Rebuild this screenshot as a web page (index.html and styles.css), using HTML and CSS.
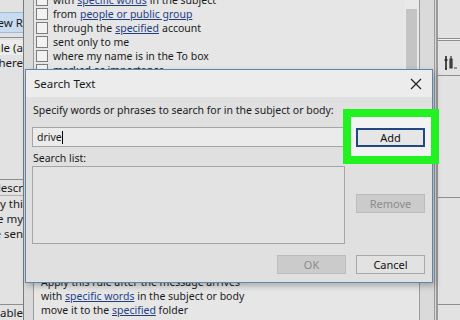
FILE: index.html
```html
<!DOCTYPE html>
<html lang="en">
<head>
  <meta charset="UTF-8">
  <meta name="viewport" content="width=device-width, initial-scale=1.0">
  <title>Search Text</title>
  <link rel="stylesheet" href="styles.css">
</head>
<body>
  <div class="desk">

    <!-- left window, mostly hidden behind the wizard -->
    <div class="side side-left">
      <div class="side-btn"><span>New R</span></div>
      <div class="side-rule"></div>
      <div class="side-row sel"><span>Rule (a</span></div>
      <div class="side-row"><span>where</span></div>
      <div class="side-space"></div>
      <div class="side-rule"></div>
      <div class="side-row"><span>descr</span></div>
      <div class="side-rule light"></div>
      <div class="side-row"><span>Apply thi</span></div>
      <div class="side-row"><span>where my</span></div>
      <div class="side-row"><span>the sen</span></div>
      <div class="side-fill"></div>
      <div class="side-rule"></div>
      <div class="side-row"><span>Enable</span></div>
    </div>

    <!-- rules wizard behind the dialog -->
    <div class="wizard">
      <div class="cond-box">
        <ul class="cond-list">
          <li><span class="chk"></span>with <a>specific words</a> in the subject</li>
          <li><span class="chk"></span>from <a>people or public group</a></li>
          <li><span class="chk"></span>through the <a>specified</a> account</li>
          <li><span class="chk"></span>sent only to me</li>
          <li><span class="chk"></span>where my name is in the To box</li>
          <li><span class="chk"></span>marked as importance</li>
          <li><span class="chk"></span>marked as sensitivity</li>
        </ul>
        <div class="scroll"><div class="thumb"></div></div>
      </div>
      <div class="desc-box">
        <p>Apply this rule after the message arrives</p>
        <p>with <a>specific words</a> in the subject or body</p>
        <p>move it to the <a>specified</a> folder</p>
      </div>
    </div>

    <!-- right window -->
    <div class="side side-right">
      <div class="side-space top"></div>
      <div class="side-rule double"></div>
      <div class="side-tool">
        <svg width="14" height="15" viewBox="0 0 14 15">
          <path d="M3 1v4M1.5 5h3M3 5v9M2 14h2" stroke="#222" stroke-width="1.6" fill="none"/>
          <path d="M8 1v3M7 4h2l0 9h-2z" stroke="#333" stroke-width="1.2" fill="#555"/>
          <path d="M11 13h3" stroke="#444" stroke-width="1"/>
        </svg>
      </div>
      <div class="side-rule"></div>
      <div class="side-space mid"></div>
      <div class="side-rule"></div>
      <div class="side-space low"></div>
      <div class="side-rule"></div>
    </div>

    <!-- the Search Text dialog -->
    <div class="dialog">
      <div class="dlg-title">
        <span>Search Text</span>
        <svg class="close" width="12" height="12" viewBox="0 0 12 12">
          <path d="M1 1l10 10M11 1L1 11" stroke="#1a1a1a" stroke-width="1.1"/>
        </svg>
      </div>
      <div class="dlg-body">
        <div class="dlg-label">Specify words or phrases to search for in the subject or body:</div>
        <div class="dlg-row add-row">
          <div class="field"><span>drive</span><i class="caret"></i></div>
          <div class="hilite"><button class="btn btn-default">Add</button></div>
        </div>
        <div class="dlg-label list-label">Search list:</div>
        <div class="dlg-row">
          <div class="listbox"></div>
          <div class="side-btns"><button class="btn" disabled>Remove</button></div>
        </div>
        <div class="dlg-foot">
          <button class="btn" disabled>OK</button>
          <button class="btn">Cancel</button>
        </div>
      </div>
    </div>

  </div>
</body>
</html>
```

FILE: styles.css
```css
* {
  box-sizing: border-box;
}

body {
  margin: 0;
  font-family: "Noto Sans", "Open Sans", sans-serif;
  font-size: 10.5px;
  color: #1a1a1a;
  background: #d6d6d6;
}

.desk {
  position: relative;
  width: 460px;
  height: 320px;
  overflow: hidden;
}

/* side windows */
.side {
  position: absolute;
  top: 0;
  width: 23px;
  height: 320px;
  overflow: hidden;
  background: #e2e2e2;
  display: flex;
  flex-direction: column;
  font-size: 11.5px;
}

.side-left {
  left: 0;
}

.side-right {
  left: 437px;
  border-left: 1px solid #9a9a9a;
}

.side-btn,
.side-row {
  display: flex;
  justify-content: flex-end;
  white-space: nowrap;
}

.side-btn {
  margin-top: 12px;
  height: 21px;
  align-items: center;
  background: #c9dcef;
  border-top: 1px solid #9fbad6;
  border-bottom: 1px solid #9fbad6;
}

.side-rule {
  height: 1px;
  background: #8e8e8e;
  margin-top: 4px;
}

.side-rule.light {
  background: #b0b0b0;
  margin-top: 0;
}

.side-rule.double {
  height: 3px;
  border-top: 1px solid #8e8e8e;
  border-bottom: 1px solid #8e8e8e;
  background: #f4f4f4;
}

.side-row {
  height: 15px;
  line-height: 15px;
}

.side-row.sel {
  margin-top: 2px;
  background: #ececec;
}

.side-space {
  height: 105px;
}

.side-fill {
  flex: 1;
}

.side-space.top {
  height: 34px;
}

.side-tool {
  height: 30px;
  padding: 14px 0 0 5px;
}

.side-tool svg {
  display: block;
}

.side-space.mid {
  height: 117px;
}

.side-space.low {
  height: 102px;
}

/* wizard window */
.wizard {
  position: absolute;
  left: 23px;
  top: -10px;
  width: 414px;
  height: 340px;
  background: #dadada;
  border-left: 1px solid #7a7a7a;
  border-right: 3px double #9a9a9a;
  padding-left: 9px;
}

.cond-box {
  display: flex;
  width: 387px;
  height: 240px;
  background: #e6e6e6;
  border: 1px solid #9a9a9a;
}

.cond-list {
  flex: 1;
  list-style: none;
  margin: 0;
  padding: 2px 0 0 2px;
}

.cond-list li {
  display: flex;
  align-items: center;
  height: 14px;
  white-space: nowrap;
}

.chk {
  width: 12px;
  height: 12px;
  margin-right: 5px;
  background: #f2f2f2;
  border: 1px solid #7c7c7c;
}

a {
  color: #1f3e86;
  text-decoration: underline;
  margin: 0 3px;
}

.scroll {
  width: 15px;
  background: #e9e9e9;
  padding: 18px 2px 0;
}

.thumb {
  height: 200px;
  background: #c4c4c4;
}

.desc-box {
  margin-top: 44px;
  width: 387px;
  height: 80px;
  background: #e6e6e6;
  border: 1px solid #9a9a9a;
  padding: 0 0 0 7px;
}

.desc-box p {
  margin: 0;
  line-height: 14px;
  white-space: nowrap;
}

.desc-box a {
  margin: 0;
}

/* dialog */
.dialog {
  position: absolute;
  left: 25px;
  top: 69px;
  width: 408px;
  height: 214px;
  background: #e0e0e0;
  border: 1px solid #5f86b3;
  box-shadow: 2px 3px 6px rgba(0, 0, 0, 0.25);
}

.dlg-title {
  display: flex;
  align-items: center;
  justify-content: space-between;
  height: 27px;
  padding: 0 10px 0 8px;
  background: #ececec;
  font-size: 11.5px;
}

.dlg-body {
  padding: 5px 7px 0 6px;
}

.dlg-label {
  height: 16px;
  line-height: 16px;
  padding-left: 1px;
}

.dlg-row {
  display: flex;
  justify-content: space-between;
}

.add-row {
  margin-top: 9px;
  align-items: center;
}

.field {
  width: 312px;
  height: 20px;
  display: flex;
  align-items: center;
  padding-left: 4px;
  background: #ebebeb;
  border: 1px solid #a5a5a5;
}

.caret {
  width: 1px;
  height: 13px;
  background: #000;
}

/* green call-out drawn over the Add button */
.hilite {
  position: relative;
}

.hilite::before {
  content: "";
  position: absolute;
  left: -13px;
  right: -14px;
  top: -19px;
  bottom: -17px;
  border: 8px solid #22f222;
  background: #f3f3f3;
}

.btn {
  position: relative;
  width: 69px;
  height: 19px;
  font-family: inherit;
  font-size: 11px;
  color: #111;
  background: #e2e2e2;
  border: 1px solid #a8a8a8;
  padding: 0;
}

.btn:disabled {
  background: #cbcbcb;
  border-color: #bcbcbc;
  color: #8c8c8c;
}

.btn-default {
  display: block;
  border: 2px solid #23487f;
  background: #e6e6e6;
}

.list-label {
  margin-top: 3px;
}

.listbox {
  width: 313px;
  height: 78px;
  background: #e3e3e3;
  border: 1px solid #a5a5a5;
}

.side-btns {
  padding-top: 28px;
}

.dlg-foot {
  display: flex;
  justify-content: flex-end;
  gap: 10px;
  margin-top: 11px;
}
```
